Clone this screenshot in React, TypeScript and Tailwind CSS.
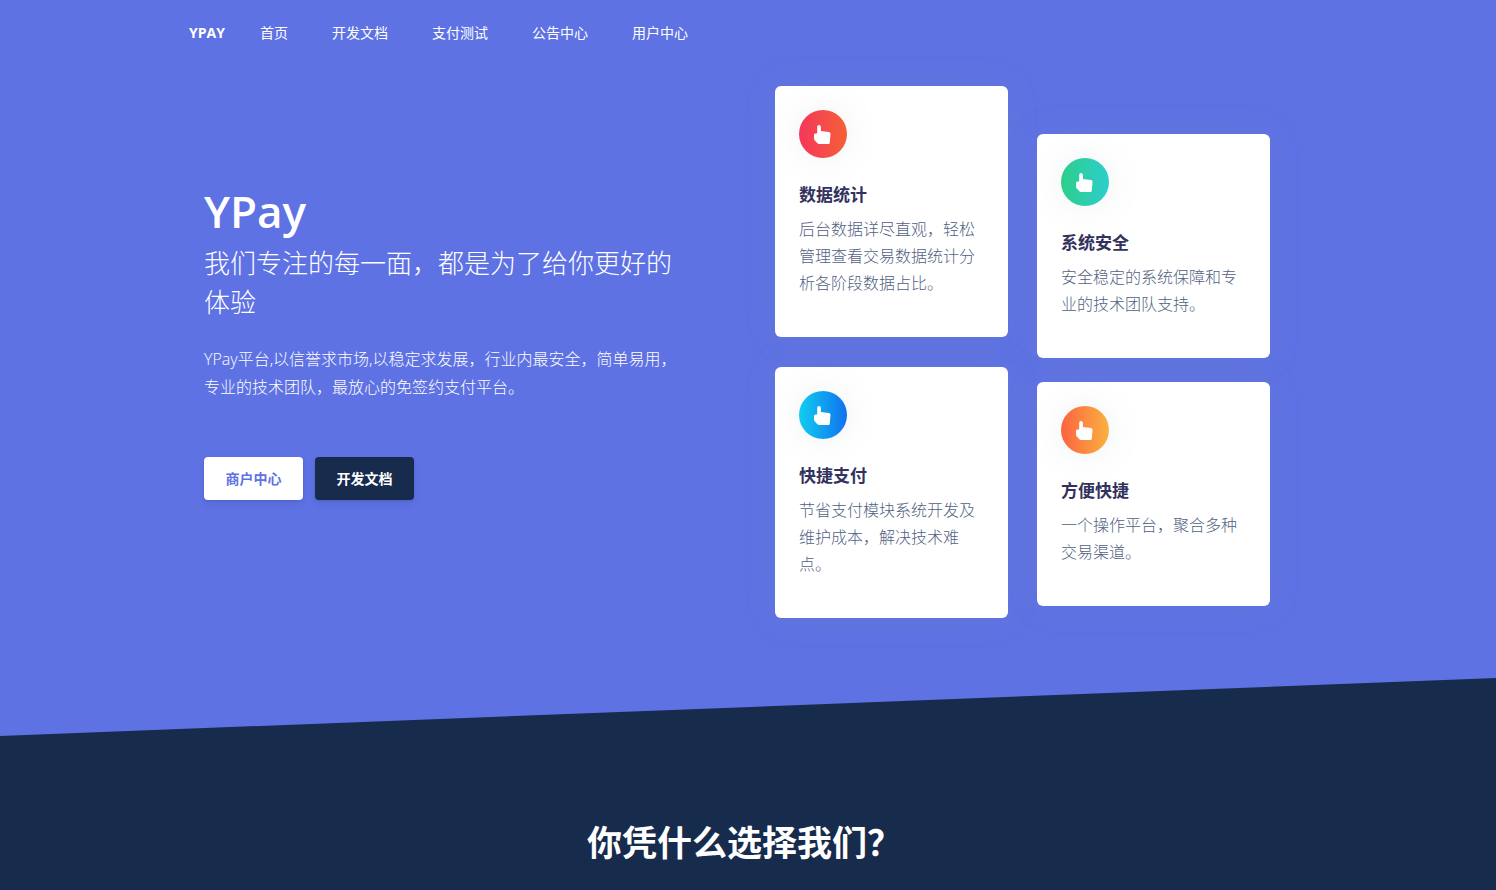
import { useState } from "react";

const navItems = ["首页", "开发文档", "支付测试", "公告中心", "用户中心"];

const leftCards = [
    { title: "数据统计", text: "后台数据详尽直观，轻松管理查看交易数据统计分析各阶段数据占比。", color: "from-[#f5365c] to-[#f56036]" },
    { title: "快捷支付", text: "节省支付模块系统开发及维护成本，解决技术难点。", color: "from-[#11cdef] to-[#1171ef]" },
];

const rightCards = [
    { title: "系统安全", text: "安全稳定的系统保障和专业的技术团队支持。", color: "from-[#2dce89] to-[#2dcecc]" },
    { title: "方便快捷", text: "一个操作平台，聚合多种交易渠道。", color: "from-[#fb6340] to-[#fbb140]" },
];

function TapIcon() {
    return (
        <svg className="w-[17px] h-[19px]" viewBox="0 0 17 19" fill="white" aria-hidden="true">
            <path d="M5 0C6.1 0 6.9.8 6.9 1.9V6L14.9 6.9C16 7.1 16.6 7.8 16.5 8.9L15.8 17.4C15.7 18.5 15.1 19 14 19H5.2C4.3 19 3.7 18.7 3.1 18.1L.9 15.6C.2 14.8 0 14.1 0 13V10C0 9 .6 8.5 1.5 8.4H3.2V1.9C3.2.8 3.9 0 5 0Z" />
        </svg>
    );
}

function Card({ title, text, color }: { title: string; text: string; color: string }) {
    return (
        <div className="bg-white rounded-md p-6 shadow-[0_0_32px_rgba(136,152,170,0.15)]">
            <div className={`size-12 rounded-full bg-linear-to-r/srgb flex items-center justify-center pr-[2px] shadow-[0_0_32px_rgba(136,152,170,0.15)] ${color}`}>
                <TapIcon />
            </div>
            <h5 className="mt-6 mb-2 text-[17px] leading-[26px] font-bold text-[#32325d]">{title}</h5>
            <p className="mb-4 text-base leading-[27px] font-light text-[#525f7f]">{text}</p>
        </div>
    );
}

export default function App() {
    const [active, setActive] = useState("首页");

    return (
        <div className="bg-[#172b4d] min-h-screen text-white font-['Open_Sans','Noto_Sans_CJK_SC',sans-serif]">
            <div className="bg-[#5e72e4]">
                <header className="pr-[22px]">
                    <nav className="max-w-[1096px] mx-auto h-[66px] flex items-center text-sm">
                        <a href="#" className="font-bold mr-[35px]">YPAY</a>
                        <div className="flex gap-11">
                            {navItems.map((item) => (
                                <a
                                    key={item}
                                    href="#"
                                    aria-current={active === item ? "page" : undefined}
                                    onClick={() => setActive(item)}
                                >
                                    {item}
                                </a>
                            ))}
                        </div>
                    </nav>
                </header>

                <section className="pt-5 pb-[60px] pr-[22px]">
                    <div className="max-w-[1096px] mx-auto px-[15px] flex items-start justify-between">
                        <div className="w-[474px] pt-[92px]">
                            <h1 className="text-[44px] leading-[66px] font-semibold">YPay</h1>
                            <p className="text-[26px] leading-[39px] font-light">我们专注的每一面，都是为了给你更好的体验</p>
                            <p className="mt-[23px] text-base leading-7 font-light">
                                YPay平台,以信誉求市场,以稳定求发展，行业内最安全，简单易用，专业的技术团队，最放心的免签约支付平台。
                            </p>
                            <div className="mt-14 flex gap-3 text-sm font-bold">
                                <button className="h-[43px] w-[99px] rounded bg-white text-[#5e72e4] shadow-[0_4px_6px_rgba(50,50,93,0.11),0_1px_3px_rgba(0,0,0,0.08)]">商户中心</button>
                                <button className="h-[43px] w-[99px] rounded bg-[#172b4d] shadow-[0_4px_6px_rgba(50,50,93,0.11),0_1px_3px_rgba(0,0,0,0.08)]">开发文档</button>
                            </div>
                        </div>

                        <div className="w-[495px] grid grid-cols-2 gap-x-[29px] items-start">
                            <div className="flex flex-col gap-[30px]">
                                {leftCards.map((c) => <Card key={c.title} {...c} />)}
                            </div>
                            <div className="flex flex-col gap-6 pt-12">
                                {rightCards.map((c) => <Card key={c.title} {...c} />)}
                            </div>
                        </div>
                    </div>
                </section>

                {/* slanted edge between the sections */}
                <svg className="block w-full h-[58px]" viewBox="0 0 100 58" preserveAspectRatio="none" fill="#172b4d" aria-hidden="true">
                    <polygon points="0,58 100,0 100,58" />
                </svg>
            </div>

            <section className="pt-[81px] pr-[7px] text-center">
                <h2 className="text-[35px] leading-[52px] font-bold">你凭什么选择我们？</h2>
            </section>
        </div>
    );
}
